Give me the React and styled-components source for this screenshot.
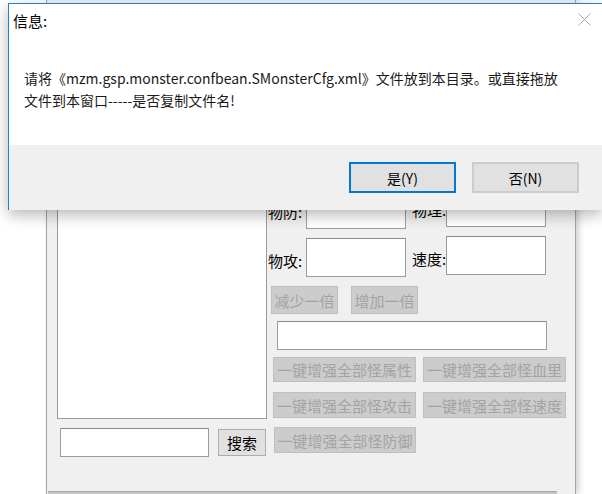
import React from 'react'
import styled, { createGlobalStyle } from 'styled-components'

const Global = createGlobalStyle`
html, body {
  margin: 0;
  padding: 0;
  background: #ffffff;
  overflow: hidden;
}
body {
  font-family: "Noto Sans CJK SC", "Noto Sans", sans-serif;
}
`

const Page = styled.div`
position: relative;
width: 602px;
height: 494px;
overflow: hidden;
`

/* the editor window behind the dialog */
const Window = styled.div`
margin-left: 46px;
width: 530px;
height: 494px;
box-sizing: border-box;
background: #f0f0f0;
border-left: 1px solid #a4a4a4;
border-right: 1px solid #a4a4a4;
box-shadow: 3px 0 6px rgba(0,0,0,0.18);
display: flex;
flex-direction: column;
font-size: 15px;
color: #000;
`

const Body = styled.div`
display: grid;
grid-template-columns: 210px 1fr;
column-gap: 1px;
padding: 190px 0 0 10px;
`

const LeftCol = styled.div`
display: flex;
flex-direction: column;
`

const ListBox = styled.div`
height: 229px;
box-sizing: border-box;
background: #fff;
border: 1px solid #9a9a9a;
`

const SearchRow = styled.div`
display: flex;
align-items: center;
gap: 9px;
margin: 9px 0 0 3px;
`

const Field = styled.div`
box-sizing: border-box;
width: ${p => p.$w}px;
height: ${p => p.$h}px;
margin-top: ${p => p.$dy || 0}px;
background: #fff;
border: 1px solid #9c9c9c;
border-top-color: #8c8c8c;
`

const Button = styled.div`
box-sizing: border-box;
width: ${p => p.$w}px;
height: ${p => p.$h}px;
display: flex;
align-items: center;
justify-content: center;
white-space: nowrap;
background: #e1e1e1;
border: 1px solid #adadad;
font-size: 15px;
color: #000;
`

const Disabled = styled(Button)`
background: #cccccc;
border-color: #bfbfbf;
color: #a3a3a3;
`

const RightCol = styled.div`
display: flex;
flex-direction: column;
`

const Row = styled.div`
display: flex;
align-items: ${p => p.$align || 'center'};
gap: ${p => p.$gap || 0}px;
margin-top: ${p => p.$top || 0}px;
padding-left: ${p => p.$indent || 0}px;
`

const Label = styled.span`
width: ${p => p.$w}px;
flex: none;
white-space: nowrap;
line-height: 1;
`

const Footer = styled.div`
margin: auto 0 0 1px;
width: 509px;
height: 2px;
background: #c6c6c6;
border-top: 1px solid #a9a9a9;
`

/* the message box */
const Dialog = styled.div`
position: absolute;
left: 8px;
top: 3px;
right: 0;
height: 207px;
box-sizing: border-box;
border-top: 1px solid #1883d7;
border-left: 1px solid #1883d7;
background: #f0f0f0;
box-shadow: 0 5px 14px rgba(0,0,0,0.28);
display: flex;
flex-direction: column;
font-family: "Noto Sans CJK SC", "Noto Sans", sans-serif;
`

const Content = styled.div`
height: 141px;
background: #fff;
padding: 0 0 0 4px;
position: relative;
`

const Title = styled.div`
padding-top: 7px;
font-size: 15px;
line-height: 20px;
color: #000;
`

const Close = styled.svg`
position: absolute;
top: 9px;
right: 11px;
`

const Message = styled.div`
margin: 36px 0 0 11px;
font-size: 14px;
line-height: 22px;
color: #1a1a1a;
width: 540px;
`

const Actions = styled.div`
display: flex;
justify-content: flex-end;
gap: 16px;
padding: 17px 23px 0 0;
`

const DlgButton = styled.div`
box-sizing: border-box;
width: 107px;
height: 31px;
display: flex;
align-items: center;
justify-content: center;
background: #e1e1e1;
border: ${p => p.$primary ? '2px solid #0078d7' : '2px solid #cccccc'};
font-size: 14px;
color: #000;
`

export default function App() {
  return (
    <Page>
      <Global />
      <Window>
        <Body>
          <LeftCol>
            <ListBox />
            <SearchRow>
              <Field $w={149} $h={29} />
              <Button $w={48} $h={27}>搜索</Button>
            </SearchRow>
          </LeftCol>
          <RightCol>
            <Row $align="flex-start">
              <Label $w={38} style={{ marginTop: 14 }}>物防:</Label>
              <Field $w={100} $h={39} />
              <Label $w={34} style={{ marginLeft: 6, marginTop: 12 }}>物理:</Label>
              <Field $w={100} $h={39} $dy={-2} />
            </Row>
            <Row $top={9} $align="flex-start">
              <Label $w={38} style={{ marginTop: 15 }}>物攻:</Label>
              <Field $w={100} $h={39} />
              <Label $w={34} style={{ marginLeft: 6, marginTop: 13 }}>速度:</Label>
              <Field $w={100} $h={39} $dy={-2} />
            </Row>
            <Row $top={9} $indent={3} $gap={13}>
              <Disabled $w={67} $h={28}>减少一倍</Disabled>
              <Disabled $w={67} $h={28}>增加一倍</Disabled>
            </Row>
            <Row $top={7} $indent={9}>
              <Field $w={270} $h={29} />
            </Row>
            <Row $top={7} $indent={5} $gap={7}>
              <Disabled $w={143} $h={25}>一键增强全部怪属性</Disabled>
              <Disabled $w={143} $h={25}>一键增强全部怪血里</Disabled>
            </Row>
            <Row $top={10} $indent={5} $gap={7}>
              <Disabled $w={143} $h={26}>一键增强全部怪攻击</Disabled>
              <Disabled $w={143} $h={26}>一键增强全部怪速度</Disabled>
            </Row>
            <Row $top={9} $indent={6}>
              <Disabled $w={142} $h={26}>一键增强全部怪防御</Disabled>
            </Row>
          </RightCol>
        </Body>
        <Footer />
      </Window>

      <Dialog>
        <Content>
          <Title>信息:</Title>
          <Close width="13" height="13" viewBox="0 0 13 13">
            <path d="M0.5 0.5 L12.5 12.5 M12.5 0.5 L0.5 12.5" stroke="#a8a8a8" strokeWidth="1" fill="none" />
          </Close>
          <Message>
            请将《mzm.gsp.monster.confbean.SMonsterCfg.xml》文件放到本目录。或直接拖放文件到本窗口-----是否复制文件名!
          </Message>
        </Content>
        <Actions>
          <DlgButton $primary>是(Y)</DlgButton>
          <DlgButton>否(N)</DlgButton>
        </Actions>
      </Dialog>
    </Page>
  )
}
